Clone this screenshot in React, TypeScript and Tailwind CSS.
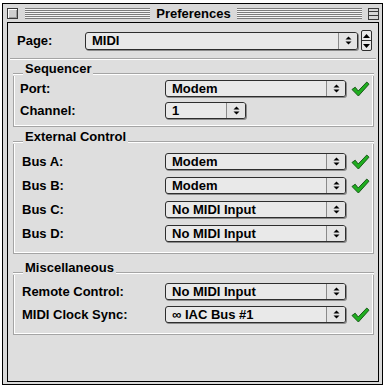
import React from 'react';

const font = { fontFamily: '"Liberation Sans", Arial, sans-serif' };

function UpDown() {
  return (
    <svg width="7" height="9" viewBox="0 0 7 9" className="block">
      <path d="M3.5 0.5 L6.5 3.5 L0.5 3.5 Z" fill="#000" />
      <path d="M0.5 5.5 L6.5 5.5 L3.5 8.5 Z" fill="#000" />
    </svg>
  );
}

function Check() {
  return (
    <svg width="19" height="16" viewBox="0 0 19 16" className="block">
      <path
        d="M1 8.5 L4.2 6.2 L7.2 10 L15.8 1 L18 3.2 L7.4 15 Z"
        fill="#1fae1f"
        stroke="#1a5a1a"
        strokeWidth="1"
        strokeLinejoin="round"
      />
    </svg>
  );
}

function Popup({ value, width, height = 17 }: { value: string; width: number; height?: number }) {
  return (
    <div
      className="flex items-stretch rounded-[3px] border border-[#2e2e2e] bg-[#e9e9e9] shadow-[1px_1px_0_#8c8c8c]"
      style={{ width, height }}
    >
      <div className="flex-1 flex items-center pl-[6px] text-[13px] font-bold text-black leading-none whitespace-nowrap">
        {value}
      </div>
      <div className="w-[19px] flex items-center justify-center border-l border-[#8a8a8a] bg-[#e4e4e4] rounded-r-[2px]">
        <UpDown />
      </div>
    </div>
  );
}

function Row({
  label,
  value,
  width = 181,
  checked = false,
  labelWidth = 143,
  pl = 8,
}: {
  label: string;
  value: string;
  width?: number;
  checked?: boolean;
  labelWidth?: number;
  pl?: number;
}) {
  return (
    <div className="flex items-center h-[17px]" style={{ paddingLeft: pl }}>
      <div className="text-[13px] font-bold text-black leading-none" style={{ width: labelWidth }}>
        {label}
      </div>
      <Popup value={value} width={width} />
      {checked && (
        <div className="ml-[5px]">
          <Check />
        </div>
      )}
    </div>
  );
}

function GroupBox({
  title,
  className = '',
  bodyClass = '',
  children,
}: {
  title: string;
  className?: string;
  bodyClass?: string;
  children: React.ReactNode;
}) {
  return (
    <div className={`ml-[5px] w-[361px] ${className}`}>
      <div className="flex items-end h-[15px]">
        <div className="w-[10px] h-[2px] mb-[1px] border-t border-[#a4a4a4] border-b border-b-white" />
        <div className="px-[2px] text-[13px] font-bold text-black leading-[15px]">{title}</div>
        <div className="flex-1 h-[2px] mb-[1px] border-t border-[#a4a4a4] border-b border-b-white" />
      </div>
      <div
        className={`border-l border-r border-b border-[#a4a4a4] shadow-[inset_1px_0_0_#fff,inset_-1px_-1px_0_#fff] ${bodyClass}`}
      >
        {children}
      </div>
    </div>
  );
}

export default function App() {
  return (
    <div className="w-[384px] h-[387px] bg-white pt-[3px] pl-[2px]" style={font}>
      <div className="w-[381px] h-[382px] border border-black bg-[#d9d9d9] flex flex-col">
        {/* title bar */}
        <div className="h-[18px] flex items-center pl-[4px] pr-[3px]">
          <div className="w-[11px] h-[11px] border border-[#3a3a3a] bg-[#cfcfcf] shadow-[inset_1px_1px_0_#fff,inset_-1px_-1px_0_#9a9a9a] mt-[1px]" />
          <div className="flex-1 h-[11px] ml-[7px] mr-[6px] bg-[repeating-linear-gradient(to_bottom,#7c7c7c_0px,#7c7c7c_1px,#f4f4f4_1px,#f4f4f4_2px)]" />
          <div className="text-[13px] font-bold text-black leading-none">Preferences</div>
          <div className="flex-1 h-[11px] ml-[6px] mr-[6px] bg-[repeating-linear-gradient(to_bottom,#7c7c7c_0px,#7c7c7c_1px,#f4f4f4_1px,#f4f4f4_2px)]" />
          <div className="w-[11px] h-[12px] border border-[#3a3a3a] bg-[#d8d8d8] flex flex-col justify-evenly mt-[1px]">
            <div className="h-px bg-[#3a3a3a]" />
            <div className="h-px bg-[#3a3a3a]" />
          </div>
        </div>

        {/* content */}
        <div className="flex-1 ml-[4px] mr-[3px] mb-[2px] border border-black bg-[#dedede] flex flex-col">
          <div className="flex items-center h-[21px] mt-[7px] pl-[9px]">
            <div className="w-[68px] text-[13px] font-bold text-black leading-none">Page:</div>
            <Popup value="MIDI" width={273} height={18} />
            <div className="ml-[3px] w-[11px] h-[21px] border border-[#2e2e2e] rounded-[2px] bg-[#e9e9e9] flex flex-col">
              <div className="flex-1 flex items-center justify-center border-b border-[#2e2e2e]">
                <svg width="7" height="4" viewBox="0 0 7 4">
                  <path d="M3.5 0 L7 4 L0 4 Z" fill="#000" />
                </svg>
              </div>
              <div className="flex-1 flex items-center justify-center">
                <svg width="7" height="4" viewBox="0 0 7 4">
                  <path d="M0 0 L7 0 L3.5 4 Z" fill="#000" />
                </svg>
              </div>
            </div>
          </div>

          <div className="mt-[7px] mx-[2px] h-[2px] border-t border-[#a4a4a4] border-b border-b-white" />

          <GroupBox title="Sequencer" className="mt-[1px]" bodyClass="pt-[4px] pb-[7px] flex flex-col gap-[5px]">
            <Row label="Port:" value="Modem" checked pl={6} labelWidth={145} />
            <Row label="Channel:" value="1" width={81} pl={6} labelWidth={145} />
          </GroupBox>

          <GroupBox title="External Control" className="mt-[2px]" bodyClass="pt-[9px] pb-[11px] flex flex-col gap-[7px]">
            <Row label="Bus A:" value="Modem" checked />
            <Row label="Bus B:" value="Modem" checked />
            <Row label="Bus C:" value="No MIDI Input" />
            <Row label="Bus D:" value="No MIDI Input" />
          </GroupBox>

          <GroupBox title="Miscellaneous" className="mt-[6px]" bodyClass="pt-[8px] pb-[11px] flex flex-col gap-[6px]">
            <Row label="Remote Control:" value="No MIDI Input" />
            <Row label="MIDI Clock Sync:" value="∞ IAC Bus #1" checked />
          </GroupBox>
        </div>
      </div>
    </div>
  );
}
